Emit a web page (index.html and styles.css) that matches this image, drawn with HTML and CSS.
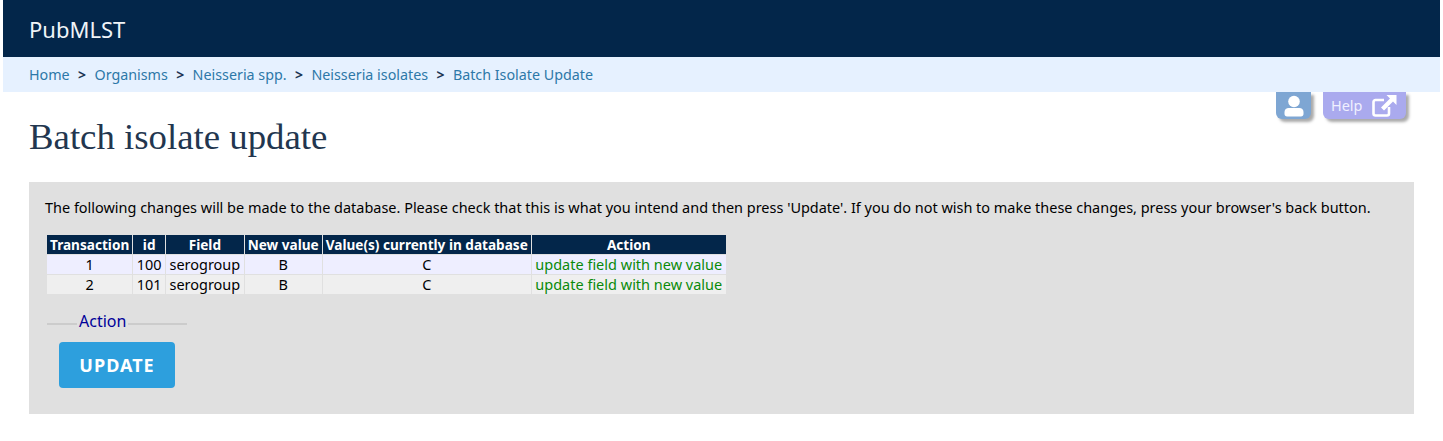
FILE: index.html
```html
<!DOCTYPE html>
<html lang="en">

<head>
    <meta charset="UTF-8">
    <title>Batch isolate update</title>
    <link rel="stylesheet" href="styles.css">
</head>

<body>
    <div class="header">PubMLST</div>
    <div class="breadcrumb">
        <a href="#">Home</a><span class="sep">&gt;</span><a href="#">Organisms</a><span class="sep">&gt;</span><a href="#">Neisseria spp.</a><span class="sep">&gt;</span><a href="#">Neisseria isolates</a><span class="sep">&gt;</span><a href="#">Batch Isolate Update</a>
    </div>
    <div class="tabs">
        <a class="tab user" href="#">
            <svg width="24" height="24" viewBox="0 0 24 24">
                <circle cx="12" cy="7.500" r="5.800" fill="#fff"/>
                <path d="M2.500 20v-2c0-2.500 2-4 4-4h11c2 0 4 1.500 4 4v2c0 1.500-1 2.500-2.500 2.500H5c-1.500 0-2.500-1-2.500-2.500z" fill="#fff"/>
            </svg>
        </a>
        <a class="tab help" href="#">Help
            <svg width="25" height="22" viewBox="0 0 25 22">
                <path d="M17 12v6.500a2 2 0 0 1-2 2H3.500a2 2 0 0 1-2-2V7a2 2 0 0 1 2-2H12" fill="none" stroke="#fff" stroke-width="2.600"/>
                <path d="M14.500 0H24.500V10L21 6.500 12 15.500 9 12.500 18 3.500z" fill="#fff"/>
            </svg>
        </a>
    </div>
    <h1>Batch isolate update</h1>
    <div class="box">
        <p>The following changes will be made to the database. Please check that this is what you intend and then press 'Update'. If you do not wish to make these changes, press your browser's back button.</p>
        <table>
            <tbody>
                <tr>
                    <th>Transaction</th>
                    <th>id</th>
                    <th>Field</th>
                    <th>New value</th>
                    <th>Value(s) currently in database</th>
                    <th>Action</th>
                </tr>
                <tr class="row1">
                    <td>1</td>
                    <td>100</td>
                    <td>serogroup</td>
                    <td>B</td>
                    <td>C</td>
                    <td class="ok">update field with new value</td>
                </tr>
                <tr class="row2">
                    <td>2</td>
                    <td>101</td>
                    <td>serogroup</td>
                    <td>B</td>
                    <td>C</td>
                    <td class="ok">update field with new value</td>
                </tr>
            </tbody>
        </table>
        <form>
            <fieldset>
                <legend>Action</legend>
                <input type="button" value="UPDATE">
            </fieldset>
        </form>
    </div>
</body>

</html>
```

FILE: styles.css
```css
body {
    margin: 0;
    padding: 0 3px;
    position: relative;
    font-family: "Noto Sans", "Open Sans", sans-serif;
    font-size: 14.46px;
    color: #000;
    background-color: #fff;
}

.header {
    height: 57px;
    line-height: 58px;
    padding-left: 26px;
    font-size: 22px;
    color: #f0f4f8;
    background-color: #03264a;
}

.breadcrumb {
    height: 35px;
    line-height: 35px;
    padding-left: 26px;
    font-size: 14.3px;
    background-color: #e6f1ff;
}

.breadcrumb a {
    color: #2d78a8;
    text-decoration: none;
}

.sep {
    margin: 0 8.4px;
    font-size: 14px;
    font-weight: bold;
    color: #1c3553;
}

/* hang from the breadcrumb bar */
.tabs {
    position: absolute;
    top: 92px;
    right: 37px;
    display: flex;
    gap: 12px;
}

.tab {
    height: 27px;
    display: flex;
    align-items: center;
    color: #f0f0ff;
    text-decoration: none;
    border-radius: 0 0 6px 6px;
    box-shadow: 3px 3px 3px #aaa;
}

.user {
    width: 35px;
    justify-content: center;
    background-color: #7ea6d3;
}

.help {
    width: 83px;
    box-sizing: border-box;
    padding-left: 8px;
    gap: 10px;
    background-color: #aaaaee;
}

h1 {
    margin: 0;
    padding: 22px 0 0 26px;
    height: 68px;
    font-family: "Liberation Serif", serif;
    font-size: 36.8px;
    font-weight: normal;
    line-height: 46px;
    color: #22364f;
}

.box {
    margin: 0 26px;
    height: 232px;
    padding: 16px 16px 0;
    box-sizing: border-box;
    background-color: #e0e0e0;
}

.box p {
    margin: 0 0 16px;
    line-height: 20px;
}

table {
    border-collapse: separate;
    border-spacing: 1px;
    margin-left: 1px;
    text-align: center;
}

th {
    height: 19px;
    padding: 0 3px;
    font-size: 13.6px;
    font-weight: bold;
    line-height: 19px;
    color: #fff;
    background-color: #03264a;
}

td {
    height: 19px;
    padding: 0 3.5px;
    line-height: 19px;
}

.row1 td {
    background-color: #eeeeff;
}

.row2 td {
    background-color: #efefef;
}

.ok {
    font-size: 14.5px;
    color: #0a8a0a;
}

fieldset {
    width: 140px;
    box-sizing: border-box;
    margin: 16px 0 0 2px;
    padding: 5px 12px 0;
    border: none;
    border-top: 2px solid #ccc;
}

legend {
    margin-left: 18px;
    padding: 0 2px 6px;
    font-size: 16px;
    line-height: 20px;
    color: #000099;
}

input[type="button"] {
    width: 116px;
    height: 46px;
    padding: 0;
    border: none;
    border-radius: 4px;
    font-family: inherit;
    font-size: 18px;
    font-weight: bold;
    letter-spacing: 1px;
    color: #fff;
    background-color: #2d9fdd;
}
```
